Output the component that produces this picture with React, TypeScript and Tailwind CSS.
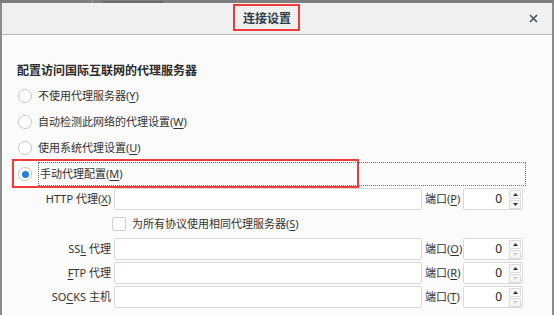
import React from "react";

function Radio({ checked }: { checked?: boolean }) {
  return (
    <div className="w-[14px] h-[14px] rounded-full border border-[#c6c6c6] bg-white flex items-center justify-center shrink-0">
      {checked && <div className="w-[7px] h-[7px] rounded-full bg-[#1f80d8]" />}
    </div>
  );
}

function Key({ k }: { k: string }) {
  return <span className="underline underline-offset-[2px] decoration-[1px]">{k}</span>;
}

function Spinner({ downDisabled }: { downDisabled?: boolean }) {
  return (
    <div className="w-[60px] h-[22px] border border-[#d9d9d9] rounded-[2px] bg-white flex items-center shrink-0">
      <div className="flex-1 text-right pr-[7px] text-[12px] leading-[14px] text-[#222]">0</div>
      <div className="flex flex-col gap-[1px] mr-[1px]">
        <div className="w-[12px] h-[9px] border border-[#dadada] bg-[#f6f6f6] rounded-[1px] flex items-center justify-center">
          <svg width="5" height="3" viewBox="0 0 5 3">
            <path d="M0 3 L2.5 0 L5 3 Z" fill="#333" />
          </svg>
        </div>
        <div className="w-[12px] h-[9px] border border-[#dadada] bg-[#f6f6f6] rounded-[1px] flex items-center justify-center">
          <svg width="5" height="3" viewBox="0 0 5 3">
            <path d="M0 0 L5 0 L2.5 3 Z" fill={downDisabled ? "#cfcfcf" : "#333"} />
          </svg>
        </div>
      </div>
    </div>
  );
}

function ProxyRow({
  label,
  port,
  downDisabled,
  className = "",
}: {
  label: React.ReactNode;
  port: string;
  downDisabled?: boolean;
  className?: string;
}) {
  return (
    <div className={"flex items-center h-[22px] " + className}>
      <div className="w-[109px] text-right leading-[14px] whitespace-nowrap">{label}</div>
      <div className="ml-[3px] w-[308px] h-[22px] border border-[#d9d9d9] rounded-[2px] bg-white shrink-0" />
      <div className="ml-[3px] w-[38px] leading-[14px] whitespace-nowrap">
        端口(<Key k={port} />)
      </div>
      <Spinner downDisabled={downDisabled} />
    </div>
  );
}

export default function App() {
  return (
    <div className="relative w-[554px] h-[315px] overflow-hidden bg-[#7f7f7f] font-['Noto_Sans','Noto_Sans_CJK_SC',sans-serif] text-[11px] text-[#333]">
      <div className="flex h-[3px]">
        <div className="w-[92px]" />
        <div className="w-[1px] bg-[#a5a5a5]" />
        <div className="w-[10px]" />
        <div className="w-[60px] h-[2px] mt-[1px] bg-[#5a5a5a] opacity-60" />
      </div>
      <div className="flex h-[312px]">
        <div className="w-[2px] bg-[#8c8c8c]" />
        <div className="flex-1 flex flex-col bg-[#fbfbfb]">
          <div className="h-[32px] bg-[#f0f0f0] border-b border-[#b9b9b9] grid grid-cols-[1fr_auto_1fr] items-center">
            <div />
            <div className="mr-[20px] text-[12px] font-semibold text-[#2f3a46] leading-[16px]">连接设置</div>
            <div className="justify-self-end mr-[14px] flex items-center">
              <svg width="9" height="9" viewBox="0 0 9 9">
                <path d="M1 1 L8 8 M8 1 L1 8" stroke="#4a4f55" strokeWidth="1.6" />
              </svg>
            </div>
          </div>
          <div className="flex flex-col">
            <div className="mt-[28px] pl-[15px] text-[12px] font-bold leading-[16px] text-[#2b2b2b]">
              配置访问国际互联网的代理服务器
            </div>
            <div className="mt-[4px] flex flex-col">
              <div className="h-[26px] flex items-center pl-[16px]">
                <Radio />
                <span className="ml-[6px] leading-[14px]">
                  不使用代理服务器(<Key k="Y" />)
                </span>
              </div>
              <div className="h-[26px] flex items-center pl-[16px]">
                <Radio />
                <span className="ml-[6px] leading-[14px]">
                  自动检测此网络的代理设置(<Key k="W" />)
                </span>
              </div>
              <div className="h-[26px] flex items-center pl-[16px]">
                <Radio />
                <span className="ml-[6px] leading-[14px]">
                  使用系统代理设置(<Key k="U" />)
                </span>
              </div>
              <div className="h-[26px] flex items-center pl-[16px]">
                <Radio checked />
                <div className="ml-[6px] w-[488px] h-[24px] border border-dotted border-[#6e6e6e] flex items-center pl-[1px]">
                  <span className="leading-[14px]">
                    手动代理配置(<Key k="M" />)
                  </span>
                </div>
              </div>
            </div>
            <ProxyRow
              className="mt-[1px]"
              label={<>HTTP 代理(<Key k="X" />)</>}
              port="P"
            />
            <div className="h-[28px] flex items-center">
              <div className="ml-[110px] w-[14px] h-[14px] border border-[#cfcfcf] rounded-[2px] bg-white" />
              <span className="ml-[6px] leading-[14px]">
                为所有协议使用相同代理服务器(<Key k="S" />)
              </span>
            </div>
            <ProxyRow label={<>SS<Key k="L" /> 代理</>} port="O" downDisabled />
            <ProxyRow className="mt-[2px]" label={<><Key k="F" />TP 代理</>} port="R" downDisabled />
            <ProxyRow className="mt-[2px]" label={<>SO<Key k="C" />KS 主机</>} port="T" downDisabled />
          </div>
        </div>
        <div className="w-[2px] bg-[#8c8c8c]" />
      </div>
      <div className="absolute left-[233px] top-[4px] w-[67px] h-[27px] border-2 border-[#ef3b3b]" />
      <div className="absolute left-[12px] top-[159px] w-[347px] h-[29px] border-2 border-[#ef3b3b]" />
    </div>
  );
}
